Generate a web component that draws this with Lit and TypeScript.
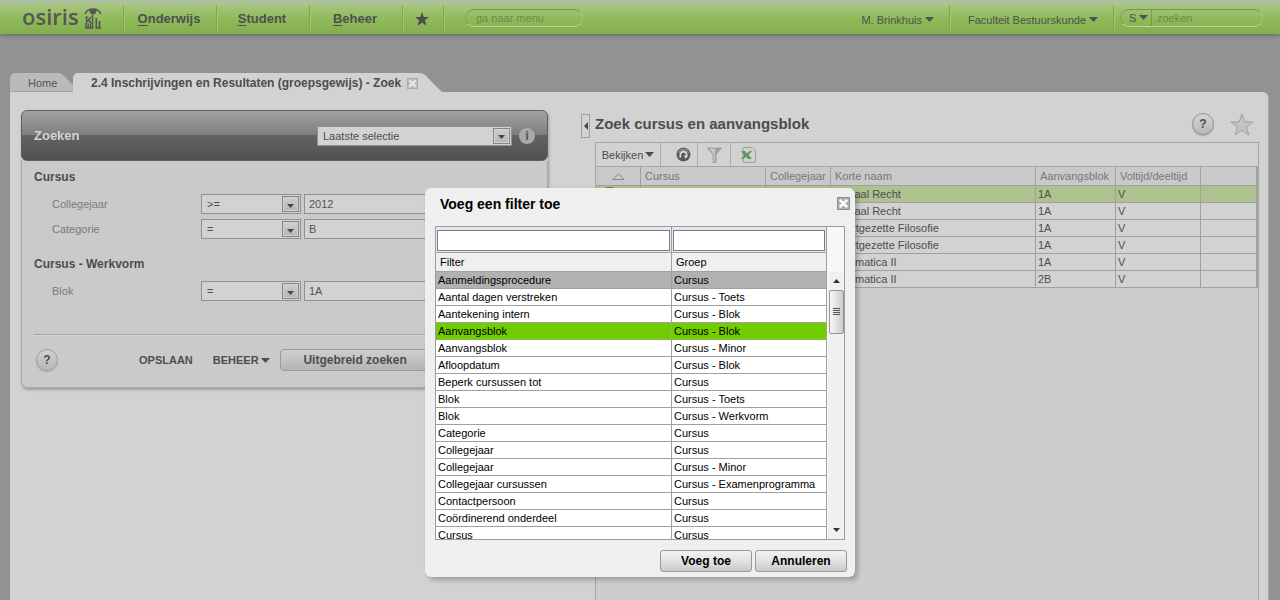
import { LitElement, html, css, svg, nothing } from "lit";
import { customElement, property, state } from "lit/decorators.js";
import { classMap } from "lit/directives/class-map.js";

const base = css`
  * { box-sizing: border-box; }
  button, input, select {
    font: inherit; color: inherit; margin: 0; padding: 0; border: 0;
    background: none; border-radius: 0; appearance: none; outline: none; min-width: 0;
  }
  a { color: inherit; text-decoration: none; }
  svg { display: block; flex: none; }
`;

const caret = html`<svg width="9" height="5" viewBox="0 0 9 5"><path d="M0 0h9L4.500 5z" fill="currentColor"/></svg>`;

const closeIcon = html`<svg width="13" height="13" viewBox="0 0 13 13">
  <rect x=".5" y=".5" width="12" height="12" fill="#b0b0b0" stroke="#8d8d8d"/>
  <path d="M2.800 2.800l7.400 7.400M10.200 2.800l-7.400 7.400" stroke="#fff" stroke-width="2.400"/></svg>`;

/* Drop-down with a boxed arrow drawn over the native select. */
@customElement("osiris-select")
class OsirisSelect extends LitElement {
  @property() label = "";
  @property({ attribute: false }) options: string[] = [];
  static styles = [base, css`
    :host { display: grid; }
    select, .arrow { grid-area: 1 / 1; }
    select {
      height: 20px; padding: 0 20px 0 5px; color: #4d4d4d; background: #d2d2d2;
      border: 1px solid #919191; width: 100%;
    }
    .arrow {
      width: 17px; height: 16px; align-self: center; justify-self: end; margin-right: 2px;
      border: 1px solid #858585; box-shadow: inset 0 0 0 1px #d2d2d2;
      background: linear-gradient(#cfcfcf, #b5b5b5); color: #484848;
      display: grid; place-items: center; padding-top: 3px; pointer-events: none;
    }
  `];
  render() {
    return html`<select aria-label=${this.label}>${this.options.map(o => html`<option>${o}</option>`)}</select>
      <span class="arrow"><svg width="7" height="4" viewBox="0 0 7 4"><path d="M0 0h7L3.500 4z" fill="currentColor"/></svg></span>`;
  }
}

@customElement("osiris-header")
class OsirisHeader extends LitElement {
  static styles = [base, css`
    :host {
      display: flex; align-items: stretch; height: 34px; color: #4f4f4f; position: relative;
      border-top: 1px solid #a3b7cf;
      background: linear-gradient(#b0c68e, #8ebb58 55%, #85ad51);
      box-shadow: 0 1px 4px rgba(0, 0, 0, .35);
    }
    .sep {
      background: linear-gradient(90deg, #7fa850 50%, #a4c873 50%) right 4px / 2px 26px no-repeat;
    }
    .logo { width: 125px; display: flex; padding: 0 0 0 22px; align-items: center; gap: 5px;
      font: 22px/30px "Open Sans", "Noto Sans", sans-serif; font-weight: 600; color: #565656; }
    .logo span { padding-bottom: 3px; }
    nav { display: flex; font-size: 13px; font-weight: bold; flex: 1; }
    nav a { width: 93px; display: grid; place-items: center; padding: 2px 5px 0 0; }
    nav a u { text-underline-offset: 2px; }
    nav a.fav { width: 41px; }
    .pill {
      display: flex; align-items: center; height: 18px; border-radius: 9px; align-self: center;
      border: 1px solid; border-color: #78974f #a9c585 #bdd59c #84a45a; color: #4f4f4f;
      overflow: hidden; font-size: 11px; font-weight: normal;
    }
    .pill input { width: 100%; height: 16px; }
    .pill input::placeholder { color: #6d8a49; opacity: 1; }
    .menu { width: 118px; margin-left: 20px; padding-left: 10px; }
    .user { display: flex; align-items: center; gap: 3px; padding: 4px 0 0; }
    .user.a { padding-right: 17px; }
    .user.b { padding-left: 17px; padding-right: 17px; }
    .search { width: 143px; margin: 0 17px 0 5px; }
    .search button { width: 31px; height: 16px; flex: none; display: flex; align-items: center; gap: 3px; padding-left: 8px; border-right: 1px solid #78974f; }
    .search input { padding-left: 5px; }
  `];
  render() {
    return html`
      <a class="logo sep" href="#" aria-label="osiris"><span>osiris</span>
        <svg width="18" height="22" viewBox="0 0 18 22" fill="none" stroke="#555" stroke-width="1.300">
          <path d="M1 7C4 .2 14 .2 17 7" stroke-width="1.500"/>
          <path d="M5.500 3.200C5 9 13 9 12.500 3.200 10.500 1.800 7.500 1.800 5.500 3.200z" fill="#555" stroke="none"/>
          <path d="M1.200 10.300h2.600M2.500 10.300v3M7.500 9.500l1-.5v11.500M6.800 10L2 16M2 13.500h3l1.500 2v5M2 16v4.500M4.200 16.500v4M.8 21h8.700" stroke-width="1.400"/>
          <path d="M12.300 11v9.500M15.500 14v6.500M11.500 21H17" stroke-width="1.600"/>
        </svg></a>
      <nav>
        <a class="sep" href="#"><div><u>O</u>nderwijs</div></a>
        <a class="sep" href="#"><div><u>S</u>tudent</div></a>
        <a class="sep" href="#"><div><u>B</u>eheer</div></a>
        <a class="sep fav" href="#" aria-label="Favorieten"><svg width="14" height="14" viewBox="0 0 14 14"><path d="M7 0l1.800 5H14L9.900 8.300 11.500 13.700 7 10.500 2.500 13.700 4.100 8.300 0 5h5.200z" fill="#4d4d4d"/></svg></a>
        <label class="pill menu"><input aria-label="ga naar menu" placeholder="ga naar menu"></label>
      </nav>
      <button class="user a sep">M. Brinkhuis ${caret}</button>
      <button class="user b sep">Faculteit Bestuurskunde ${caret}</button>
      <div class="pill search"><button>S ${caret}</button><input aria-label="zoeken" placeholder="zoeken"></div>`;
  }
}

interface Criterion { name: string; op: string; value: string; }
const groups: { title: string; rows: Criterion[] }[] = [
  { title: "Cursus", rows: [{ name: "Collegejaar", op: ">=", value: "2012" }, { name: "Categorie", op: "=", value: "B" }] },
  { title: "Cursus - Werkvorm", rows: [{ name: "Blok", op: "=", value: "1A" }] },
];

@customElement("search-panel")
class SearchPanel extends LitElement {
  static styles = [base, css`
    :host { display: block; border-radius: 6px; box-shadow: 1px 2px 3px rgba(0, 0, 0, .25); background: #cacaca; }
    header {
      height: 51px; display: flex; align-items: center; padding: 0 12px; border-radius: 6px;
      border: 1px solid #5f5f5f; color: #d4d4d4;
      background: linear-gradient(#a3a3a3, #7d7d7d 50%, #636363 50%, #505050);
    }
    h2, h3 { margin: 0; font-weight: bold; line-height: 16px; }
    h2 { flex: 1; font-size: 13px; }
    header osiris-select { width: 195px; }
    .info { width: 16px; height: 16px; margin-left: 7px; border-radius: 8px; background: #a9a9a9; color: #555; font-size: 13px; line-height: 16px; font-weight: bold; text-align: center; }
    .body { border: 1px solid #a8a9af; border-top: 0; border-radius: 0 0 6px 6px; padding: 8px 12px 16px; }
    h3 { color: #4d4d4d; font-size: 12px; }
    section { padding-bottom: 17px; }
    .row { display: grid; grid-template-columns: 149px 100px 1fr; align-items: center; padding-left: 18px; margin-top: 5px; }
    h3 + .row { margin-top: 9px; }
    label { color: #7a7a7a; }
    .row input { height: 20px; margin-left: 3px; border: 1px solid #919191; background: #d2d2d2; padding-left: 4px; color: #555; width: 100%; }
    footer { margin-top: 16px; border-top: 1px solid #a0a5b1; box-shadow: inset 0 1px #d4d4d4; padding: 14px 0 0 2px; display: flex; align-items: center; font-weight: bold; color: #4d4d4d; }
    .help { width: 22px; height: 22px; border-radius: 11px; border: 1px solid #a0a0a0; background: linear-gradient(#d0d0d0, #b8b8b8); font-size: 12px; font-weight: bold; box-shadow: 0 1px 1px #aaa; }
    .save { margin-left: 81px; }
    .manage { margin-left: 20px; display: flex; align-items: center; gap: 2px; }
    .adv { margin-left: 10px; width: 151px; height: 22px; font-size: 12px; border: 1px solid #9b9b9b; border-radius: 4px; background: linear-gradient(#cfcfcf, #b4b4b4); }
  `];
  render() {
    return html`
      <header><h2>Zoeken</h2><osiris-select label="Selectie" .options=${["Laatste selectie"]}></osiris-select><span class="info">i</span></header>
      <div class="body">
        ${groups.map((g, gi) => html`<section><h3>${g.title}</h3>
          ${g.rows.map((r, i) => html`<div class="row">
            <label for="v${gi}${i}">${r.name}</label>
            <osiris-select label="${r.name} operator" .options=${[r.op]}></osiris-select>
            <input id="v${gi}${i}" .value=${r.value}></div>`)}</section>`)}
        <footer><button class="help" aria-label="Help">?</button><button class="save">OPSLAAN</button>
          <button class="manage">BEHEER ${caret}</button><button class="adv">Uitgebreid zoeken</button></footer>
      </div>`;
  }
}

const courses = [
  ["Sociaal Recht", "1A", "V"], ["Sociaal Recht", "1A", "V"],
  ["Voortgezette Filosofie", "1A", "V"], ["Voortgezette Filosofie", "1A", "V"],
  ["Informatica II", "1A", "V"], ["Informatica II", "2B", "V"],
];

@customElement("result-panel")
class ResultPanel extends LitElement {
  @state() private selected = 0;
  static styles = [base, css`
    :host { display: flex; flex-direction: column; min-width: 0; color: #4d4d4d; }
    header { display: flex; align-items: center; height: 28px; margin-bottom: 4px; padding-right: 5px; }
    h2 { margin: 0; font-size: 15px; line-height: 18px; flex: 1; }
    .help { width: 22px; height: 22px; border-radius: 11px; border: 1px solid #929292; background: linear-gradient(#d4d4d4, #b8b8b8); font-size: 12px; font-weight: bold; margin-right: 16px; box-shadow: 0 1px 1px #aaa; }
    .grid { flex: 1; border: 1px solid #a3a7ae; border-bottom: 0; background: #cdcdcd; }
    .tools { display: flex; height: 24px; border-bottom: 1px solid #a3a7ae; background: #d2d2d2; }
    .tools button { display: flex; align-items: center; justify-content: center; gap: 2px; border-right: 1px solid #a9adb8; width: 37px; padding-left: 8px; }
    .tools button.view { width: 65px; padding: 0; }
    .tools button.filter { width: 33px; padding: 0; }
    .tools button.xls { border: 0; width: 35px; padding: 0; }
    table { width: 100%; border-collapse: separate; border-spacing: 0; table-layout: fixed; border-right: 2px solid #a3a3a3; background: #d2d2d2; }
    th { height: 19px; padding: 0 0 0 4px; font-weight: normal; text-align: left; background: #c9c9c9; color: #777; }
    td { height: 17px; padding: 0 0 0 2px; }
    th, td { border-right: 1px solid #a0a0a0; border-bottom: 1px solid #a0a0a0; white-space: nowrap; overflow: hidden; line-height: 14px; }
    th:last-child, td:last-child { border-right: 0; }
    th.sort { padding: 0; }
    th.sort svg { margin: 0 auto; }
    td.mark { padding: 0; vertical-align: top; }
    td.mark svg { margin-left: 10px; }
    tr.on td { background: #aec28f; }
    .c1 { width: 45px; } .c2 { width: 125px; } .c3 { width: 65px; }
    .c5 { width: 80px; } .c6 { width: 85px; } .c7 { width: 55px; }
  `];
  render() {
    return html`
      <header><h2>Zoek cursus en aanvangsblok</h2>
        <button class="help" aria-label="Help">?</button>
        <button aria-label="Favoriet"><svg width="24" height="23" viewBox="0 0 24 23"><path d="M12 1l2.800 7.800 8.200.2-6.500 5 2.400 8L12 17.400 5.100 22l2.400-8L1 9l8.200-.2z" fill="#c4c4c4" stroke="#a0a0a0"/></svg></button>
      </header>
      <div class="grid">
        <div class="tools">
          <button class="view">Bekijken ${caret}</button>
          <button aria-label="Vernieuwen"><svg width="15" height="15" viewBox="0 0 15 15"><circle cx="7.500" cy="7.500" r="7" fill="#5c5c5c"/><path d="M1.500 6a6.300 6.300 0 0 1 12 0z" fill="#858585"/><path d="M4.300 10.500V8a3.200 3.200 0 1 1 5.800 1.800" stroke="#dcdcdc" stroke-width="1.700" fill="none"/><path d="M8 8.500l4 .3-2.600 3z" fill="#dcdcdc"/></svg></button>
          <button class="filter" aria-label="Filter"><svg width="15" height="16" viewBox="0 0 15 16"><path d="M.5 1h14L9 7.500V15.500H6V7.500z" fill="#a0a0a0" stroke="#979797" stroke-width=".8"/><path d="M2.500 1.800h6L7.800 7v8H6.500V7z" fill="#c6c6c6"/></svg></button>
          <button class="xls" aria-label="Excel"><svg width="15" height="16" viewBox="0 0 15 16"><path d="M2.500.5h9l3 3v10.500q0 1.500-1.500 1.500h-9.500q-1.500 0-1.500-1.500v-13z" fill="#d0d3cd" stroke="#97a392"/><path d="M0 4h4l2 2.500L8.500 4h2.500L7.500 8l3.500 4H6.800L5 9.800 2.500 12H0l3.200-3.800z" fill="#5f9563"/></svg></button>
        </div>
        <table>
          <colgroup><col class="c1"><col class="c2"><col class="c3"><col><col class="c5"><col class="c6"><col class="c7"></colgroup>
          <thead><tr>
            <th class="sort"><svg width="13" height="7" viewBox="0 0 13 7"><path d="M.8 6.500L6.500.8l5.700 5.700z" fill="none" stroke="#8a8a8a"/></svg></th>
            <th>Cursus</th><th>Collegejaar</th><th>Korte naam</th><th>Aanvangsblok</th><th>Voltijd/deeltijd</th><th></th>
          </tr></thead>
          <tbody>${courses.map((c, i) => html`<tr class=${classMap({ on: i === this.selected })} @click=${() => (this.selected = i)}>
            <td class="mark">${i === this.selected ? svg`<svg width="8" height="3"><path d="M0 1.500h8" stroke="#728060"/></svg>` : nothing}</td>
            <td></td><td></td><td>${c[0]}</td><td>${c[1]}</td><td>${c[2]}</td><td></td></tr>`)}</tbody>
        </table>
      </div>`;
  }
}

const filters: [string, string][] = [
  ["Aanmeldingsprocedure", "Cursus"], ["Aantal dagen verstreken", "Cursus - Toets"],
  ["Aantekening intern", "Cursus - Blok"], ["Aanvangsblok", "Cursus - Blok"],
  ["Aanvangsblok", "Cursus - Minor"], ["Afloopdatum", "Cursus - Blok"],
  ["Beperk cursussen tot", "Cursus"], ["Blok", "Cursus - Toets"], ["Blok", "Cursus - Werkvorm"],
  ["Categorie", "Cursus"], ["Collegejaar", "Cursus"], ["Collegejaar", "Cursus - Minor"],
  ["Collegejaar cursussen", "Cursus - Examenprogramma"], ["Contactpersoon", "Cursus"],
  ["Coördinerend onderdeel", "Cursus"], ["Cursus", "Cursus"],
];

@customElement("filter-dialog")
class FilterDialog extends LitElement {
  @state() private chosen = 3;
  static styles = [base, css`
    :host { display: block; width: 430px; padding: 8px 5px 5px 10px; background: #efefef; color: #000; border-radius: 6px; box-shadow: 3px 3px 5px rgba(0, 0, 0, .25); }
    header { display: flex; align-items: flex-start; height: 30px; padding: 0 0 0 5px; }
    h2 { flex: 1; margin: 0; font-size: 14px; line-height: 16px; }
    header button { padding-top: 1px; }
    .frame { display: flex; height: 314px; width: 410px; border: 1px solid #9a9ca3; background: #fff; }
    .list { flex: 1; overflow: hidden; }
    table { width: 100%; border-collapse: separate; border-spacing: 0; table-layout: fixed; }
    col.g { width: 155px; }
    th, td { border-right: 1px solid #a0a0a0; border-bottom: 1px solid #a0a0a0; padding: 0 0 0 2px; text-align: left; white-space: nowrap; font-weight: normal; line-height: 14px; }
    td { height: 17px; }
    tr.q th { height: 26px; padding: 1px 1px 0; background: #e6e8ef; }
    tr.q input { display: block; width: 100%; height: 21px; border: 1px solid #7b7d83; background: #fff; padding: 0 3px; }
    tr.h th { height: 19px; padding-left: 4px; background: #efefef; }
    tr.off td { background: #b1b1b1; }
    tr.on td { background: #71cc00; border-color: #8fb85b; }
    .rail { width: 17px; padding: 45px 0 0 1px; background: #f7f7f5; display: flex; }
    .bar { flex: 1; background: #f0f0f0; display: flex; flex-direction: column; align-items: center; }
    .bar button { height: 18px; width: 16px; display: grid; place-items: center; }
    .bar .thumb { height: 44px; width: 15px; border: 1px solid #979797; border-radius: 2px; background: linear-gradient(90deg, #f5f5f5, #e2e2e4 50%, #c8c9cc); display: grid; place-items: center; }
    .space { flex: 1; }
    footer { display: flex; justify-content: flex-end; gap: 3px; padding: 10px 3px 0 0; }
    footer button { width: 92px; height: 22px; font-size: 12px; font-weight: bold; border: 1px solid #999; border-radius: 3px; background: linear-gradient(#f2f2f2, #e2e2e2 50%, #c9c9c9); }
  `];
  render() {
    return html`
      <header><h2>Voeg een filter toe</h2><button aria-label="Sluiten">${closeIcon}</button></header>
      <div class="frame">
        <div class="list"><table>
          <colgroup><col><col class="g"></colgroup>
          <thead>
            <tr class="q"><th><input aria-label="Filter"></th><th><input aria-label="Groep"></th></tr>
            <tr class="h"><th>Filter</th><th>Groep</th></tr>
          </thead>
          <tbody>${filters.map(([f, g], i) => html`<tr class=${classMap({ off: i === 0, on: i === this.chosen })} @click=${() => (this.chosen = i)}><td>${f}</td><td>${g}</td></tr>`)}</tbody>
        </table></div>
        <div class="rail"><div class="bar">
          <button aria-label="Omhoog"><svg width="7" height="4" viewBox="0 0 7 4"><path d="M0 4h7L3.500 0z" fill="#333"/></svg></button>
          <span class="thumb"><svg width="7" height="8" viewBox="0 0 7 8"><path d="M0 .5h7M0 2.500h7M0 4.500h7M0 6.500h7" stroke="#555"/></svg></span>
          <span class="space"></span>
          <button aria-label="Omlaag"><svg width="7" height="4" viewBox="0 0 7 4"><path d="M0 0h7L3.500 4z" fill="#333"/></svg></button>
        </div></div>
      </div>
      <footer><button>Voeg toe</button><button>Annuleren</button></footer>`;
  }
}

@customElement("app-root")
class AppRoot extends LitElement {
  static styles = [base, css`
    :host {
      display: flex; flex-direction: column; height: 100vh; overflow: hidden; position: relative;
      font: 11px/14px "Liberation Sans", Arial, sans-serif; background: #929292; color: #4d4d4d;
    }
    .tabs { display: flex; padding: 39px 10px 0; }
    .tab { display: flex; height: 19px; align-items: center; border-radius: 5px 0 0 0; white-space: nowrap; }
    .home { padding: 1px 0 0 18px; width: 48px; background: #bababa; border-bottom: 1px solid #a6a6a6; color: #555; }
    .active { background: #d2d2d2; font-size: 12px; font-weight: bold; padding: 1px 0 0 18px; gap: 6px; }
    .active button svg { width: 11px; height: 11px; opacity: .6; }
    main {
      flex: 1; min-height: 0; margin: 0 11px 0 10px; background: #d2d2d2; border-radius: 0 6px 0 0;
      border-right: 1px solid #a8a8a8;
      display: grid; grid-template-columns: 527px 33px 14px minmax(0, 1fr); padding: 18px 9px 0 11px;
    }
    search-panel { align-self: start; }
    .split { grid-column: 3; margin: 4px 0 0; width: 9px; height: 24px; border: 1px solid #a0a0a0; display: grid; place-items: center; align-self: start; color: #444; }
    .overlay { position: absolute; top: 188px; left: 0; right: 0; display: flex; justify-content: center; }
  `];
  render() {
    return html`
      <osiris-header></osiris-header>
      <div class="tabs">
        <a class="tab home" href="#">Home</a>
        <svg width="15" height="19" viewBox="0 0 15 19"><path d="M0 0c4 0 6 3 15 12v7H0z" fill="#bababa"/><path d="M0 18.500h15" stroke="#a6a6a6"/></svg>
        <div class="tab active"><span>2.4 Inschrijvingen en Resultaten (groepsgewijs) - Zoek</span><button aria-label="Tab sluiten">${closeIcon}</button></div>
        <svg width="24" height="19" viewBox="0 0 24 19"><path d="M0 0c7 0 8 3 13 8l11 11H0z" fill="#d2d2d2"/></svg>
      </div>
      <main>
        <search-panel></search-panel>
        <button class="split" aria-label="Inklappen"><svg width="4" height="8" viewBox="0 0 4 8"><path d="M4 0v8L0 4z" fill="currentColor"/></svg></button>
        <result-panel></result-panel>
      </main>
      <div class="overlay"><filter-dialog role="dialog" aria-label="Voeg een filter toe"></filter-dialog></div>`;
  }
}
